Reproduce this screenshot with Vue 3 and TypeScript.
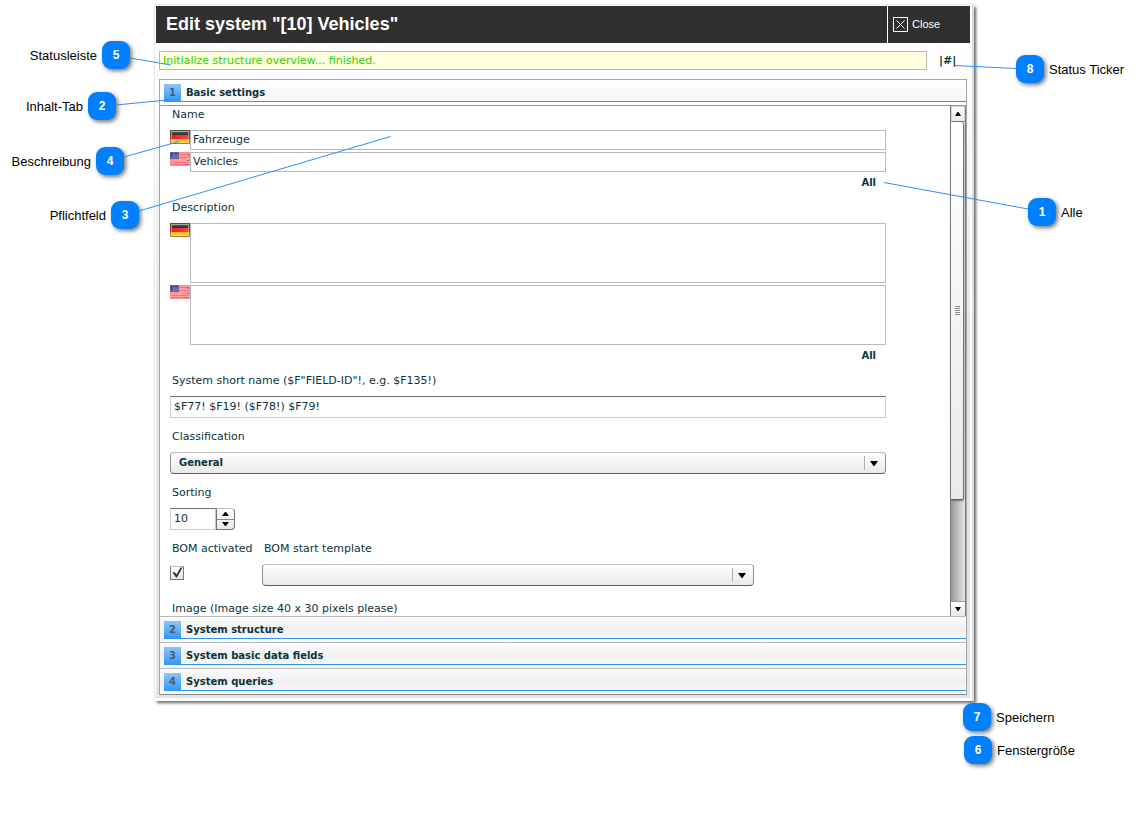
<script setup lang="ts">
import { ref } from 'vue'

type Side = 'left' | 'right'

interface Callout {
  id: number
  label: string
  side: Side
  edge: number
  top: number
}

const callouts: Callout[] = [
  { id: 5, label: 'Statusleiste', side: 'left', edge: 130, top: 41 },
  { id: 2, label: 'Inhalt-Tab', side: 'left', edge: 116, top: 92 },
  { id: 4, label: 'Beschreibung', side: 'left', edge: 124, top: 147 },
  { id: 3, label: 'Pflichtfeld', side: 'left', edge: 139, top: 201 },
  { id: 8, label: 'Status Ticker', side: 'right', edge: 126, top: 55 },
  { id: 1, label: 'Alle', side: 'right', edge: 114, top: 198 },
  { id: 7, label: 'Speichern', side: 'right', edge: 179, top: 703 },
  { id: 6, label: 'Fenstergröße', side: 'right', edge: 178, top: 736 },
]

function place(c: Callout) {
  return c.side === 'left'
    ? { top: `${c.top}px`, left: '0', width: `${c.edge}px` }
    : { top: `${c.top}px`, left: `calc(100% - ${c.edge}px)` }
}

const languages = ['de', 'us'] as const
const names = ref({ de: 'Fahrzeuge', us: 'Vehicles' })
const descriptions = ref({ de: '', us: '' })
const shortName = ref('$F77! $F19! ($F78!) $F79!')
const classification = ref('General')
const sorting = ref('10')
const bomActive = ref(true)
const template = ref('')
const closedTabs = [
  { no: 2, title: 'System structure' },
  { no: 3, title: 'System basic data fields' },
  { no: 4, title: 'System queries' },
]

function step(delta: number) {
  sorting.value = String(Number(sorting.value) + delta)
}
</script>

<template>
  <div class="page">
    <svg class="defs" width="0" height="0" aria-hidden="true">
      <defs>
        <linearGradient id="de-black" x1="0" y1="0" x2="0" y2="1">
          <stop offset="0" stop-color="#6a6a66" />
          <stop offset="1" stop-color="#2c2c2c" />
        </linearGradient>
        <linearGradient id="de-red" x1="0" y1="0" x2="1" y2="0">
          <stop offset="0" stop-color="#e01c1c" />
          <stop offset="1" stop-color="#ff4a4a" />
        </linearGradient>
        <linearGradient id="de-gold" x1="0" y1="0" x2="0" y2="1">
          <stop offset="0" stop-color="#f0b818" />
          <stop offset="1" stop-color="#ffe46a" />
        </linearGradient>
      </defs>
      <symbol id="flag-de" viewBox="0 0 20 14">
        <rect width="20" height="5" fill="url(#de-black)" />
        <rect y="5" width="20" height="4" fill="url(#de-red)" />
        <rect y="9" width="20" height="5" fill="url(#de-gold)" />
        <path d="M0.500 5V0.500H19.500V5" fill="none" stroke="#55523e" />
        <path d="M1 1.500H19" stroke="#aaa99c" />
        <path d="M1.500 2v3M18.500 2v3" stroke="#918f80" />
        <path d="M0.500 5v4M19.500 5v4" stroke="#9a3c28" />
        <path d="M1.500 5v4M18.500 5v4" stroke="#f07a6a" />
        <path d="M0.500 9v4.500H19.500V9" fill="none" stroke="#a48430" />
      </symbol>
      <symbol id="flag-us" viewBox="0 0 20 14">
        <rect width="20" height="14" fill="#ff9092" />
        <path d="M9 2.500h8M9 5.500h9M1 10.500h18M1 12.500h18" stroke="#ff7078" />
        <path d="M9 4h10M9 7h10M1 9h18M1 11.500h18" stroke="#ffa9a4" />
        <path d="M17 2.500h2v2M17 8.500h2M15 12.500h4" fill="none" stroke="#d85a70" />
        <rect width="9" height="7" fill="#6666a4" />
        <path d="M1.500 5V1.500H3M5 1.500h2" fill="none" stroke="#33338c" />
        <path d="M4 3.500h1M3 5.500h1M7 4.500h1" stroke="#8484b8" />
      </symbol>
    </svg>

    <main class="dialog">
      <header class="titlebar">
        <h1>Edit system "[10] Vehicles"</h1>
        <button type="button" class="close">
          <svg width="15" height="15" viewBox="0 0 15 15" aria-hidden="true">
            <rect x="0.5" y="0.5" width="14" height="14" fill="none" stroke="#fff" />
            <path d="M3.500 3.500l8 8M11.500 3.500l-8 8" stroke="#fff" fill="none" />
          </svg>
          Close
        </button>
      </header>

      <div class="body">
        <div class="status">
          <output class="message">Initialize structure overview... finished.</output>
          <span class="ticker">|#|</span>
        </div>

        <div class="accordion">
          <button type="button" class="tab" aria-expanded="true">
            <span class="no">1</span><span class="tab-title">Basic settings</span>
          </button>
          <section class="panel">
            <form class="form" @submit.prevent>
              <span class="caption first">Name</span>
              <div class="group">
                <label v-for="l in languages" :key="l" class="localized">
                  <svg class="flag" role="img" :aria-label="`Name ${l}`"><use :href="`#flag-${l}`" /></svg>
                  <input v-model="names[l]" type="text" class="box line" />
                </label>
              </div>
              <button type="button" class="all">All</button>

              <span class="caption follow">Description</span>
              <div class="group">
                <label v-for="l in languages" :key="l" class="localized">
                  <svg class="flag" role="img" :aria-label="`Description ${l}`"><use :href="`#flag-${l}`" /></svg>
                  <textarea v-model="descriptions[l]" class="box area"></textarea>
                </label>
              </div>
              <button type="button" class="all">All</button>

              <label class="caption follow" for="short">System short name ($F"FIELD-ID"!, e.g. $F135!)</label>
              <input id="short" v-model="shortName" type="text" class="inset" />

              <label class="caption next" for="class">Classification</label>
              <div class="select">
                <select id="class" v-model="classification">
                  <option>General</option>
                </select>
                <svg class="arrow" viewBox="0 0 8 5"><path d="M0 0h8L4.500 5h-1z" /></svg>
              </div>

              <label class="caption next" for="sort">Sorting</label>
              <div class="stepper">
                <input id="sort" v-model="sorting" type="text" class="inset" />
                <div class="steps">
                  <button type="button" aria-label="Increase" @click="step(1)">
                    <svg width="7" height="4" viewBox="0 0 7 4"><path d="M0 4h7L4 0H3z" /></svg>
                  </button>
                  <button type="button" aria-label="Decrease" @click="step(-1)">
                    <svg width="7" height="4" viewBox="0 0 7 4"><path d="M0 0h7L4 4H3z" /></svg>
                  </button>
                </div>
              </div>

              <div class="bom">
                <div class="bom-active">
                  <label class="caption next" for="bom">BOM activated</label>
                  <span class="check">
                    <input id="bom" v-model="bomActive" type="checkbox" />
                    <svg v-if="bomActive" class="tick" viewBox="0 0 14 14"><path d="M2.500 6.500l2-.5 2 2.500L10.500 1.500h2L7 11.500H6z" /></svg>
                  </span>
                </div>
                <div class="bom-template">
                  <label class="caption next" for="tpl">BOM start template</label>
                  <div class="select">
                    <select id="tpl" v-model="template">
                      <option value=""></option>
                    </select>
                    <svg class="arrow" viewBox="0 0 8 5"><path d="M0 0h8L4.500 5h-1z" /></svg>
                  </div>
                </div>
              </div>

              <span class="caption last">Image (Image size 40 x 30 pixels please)</span>
            </form>

            <div class="scrollbar">
              <button type="button" class="scroll-btn" aria-label="Scroll up">
                <svg width="6" height="4" viewBox="0 0 6 4"><path d="M0 4h6L3.500 0h-1z" /></svg>
              </button>
              <div class="track">
                <div class="thumb">
                  <svg width="5" height="9" viewBox="0 0 5 9"><path d="M0 .5h5M0 2.500h5M0 4.500h5M0 6.500h5M0 8.500h5" stroke="#888" /></svg>
                </div>
              </div>
              <button type="button" class="scroll-btn down" aria-label="Scroll down">
                <svg width="6" height="4" viewBox="0 0 6 4"><path d="M0 0h6L3.500 4h-1z" /></svg>
              </button>
            </div>
          </section>
          <button v-for="t in closedTabs" :key="t.no" type="button" class="tab closed" aria-expanded="false">
            <span class="no">{{ t.no }}</span><span class="tab-title">{{ t.title }}</span>
          </button>
        </div>
      </div>
    </main>

    <svg class="lines lines-left" width="400" height="240" aria-hidden="true">
      <path d="M130 58L171 65M116 105L173 99.500M124 157L179 141.500M139 211L390.500 136.500" />
    </svg>
    <svg class="lines lines-right" width="302" height="240" aria-hidden="true">
      <path d="M176 68.500L115 65.500M188 209L44 182.500" />
    </svg>
    <div v-for="c in callouts" :key="c.id" class="callout" :class="c.side" :style="place(c)">
      <span class="badge">{{ c.id }}</span>
      <span class="label">{{ c.label }}</span>
    </div>
  </div>
</template>

<style>
body {
  margin: 0;
  background: #fff;
}
</style>

<style scoped>
.page {
  position: relative;
  box-sizing: border-box;
  min-height: 100vh;
  padding: 5px 168px 60px 155px;
  font: 11px/16px "DejaVu Sans", Verdana, sans-serif;
  color: #0b333c;
}
.page * {
  box-sizing: border-box;
}
.defs {
  position: absolute;
}
button,
input,
select,
textarea {
  font: inherit;
  color: inherit;
  margin: 0;
  padding: 0;
  border: 0;
  border-radius: 0;
  background: none;
  outline: none;
}
button svg path {
  fill: #000;
}
.dialog {
  padding: 1px 4px 3px 1px;
  background: linear-gradient(90deg, #fff calc(100% - 2px), #ddd calc(100% - 2px));
  box-shadow: 2px 2px 3px #666, 0 0 2px #ccc;
}
.titlebar {
  display: flex;
  height: 37px;
  background: #303030;
  color: #fff;
}
h1 {
  flex: 1;
  margin: 0;
  padding-left: 10px;
  font: bold 18px/37px "Liberation Sans", Arial, sans-serif;
}
.close {
  display: flex;
  align-items: center;
  gap: 4px;
  width: 83px;
  padding-left: 5px;
  border-left: 1px solid #fff;
  font: 11px/15px "Liberation Sans", Arial, sans-serif;
}
.body {
  padding: 8px 3px 3px;
  background: linear-gradient(#fff, #f0f0f0 50%, #e6e6e6);
  background: linear-gradient(#fff 0, #fdfdfd 40px, #e4e4e4 300px);
}
.status {
  display: flex;
  align-items: center;
  padding-bottom: 9px;
}
.message {
  flex: 1;
  height: 19px;
  padding-left: 3px;
  border: 1px solid #b7babc;
  background: #ffffdf;
  color: #3c0;
  line-height: 17px;
}
.ticker {
  width: 40px;
  padding-left: 12px;
  font-weight: bold;
}
.accordion {
  border: 1px solid #a3a7aa;
  border-bottom-color: #888;
  background: #fff;
}
.tab {
  display: flex;
  width: 100%;
  height: 26px;
  padding: 4px 0 3px 4px;
  border-bottom: 1px solid #909497;
  background: linear-gradient(#fff, #f6f6f6 22px, #fff 22px);
  font-size: 10px;
  font-weight: bold;
  text-align: left;
  line-height: 18px;
}
.tab.closed {
  border-top: 1px solid #b7babc;
  border-bottom: 0;
  background: linear-gradient(#fbfbfb, #f0f0f0 50%, #fafafa);
}
.no {
  width: 17px;
  height: 18px;
  background: linear-gradient(#8fc5f8, #2e96f5);
  color: #44606c;
  text-align: center;
}
.tab-title {
  flex: 1;
  height: 18px;
  padding-left: 5px;
  border-bottom: 1px solid #3096ec;
}
.panel {
  display: flex;
}
.form {
  flex: 1;
  display: flex;
  flex-direction: column;
  align-items: stretch;
  padding: 0 64px 0 10px;
}
.caption {
  display: block;
  padding-left: 2px;
  margin-bottom: 7px;
}
.caption.first {
  margin-top: 1px;
}
.caption.follow {
  margin-top: 9px;
}
.caption.next {
  margin-top: 11px;
}
.caption.last {
  height: 15px;
  margin: 15px 0 0;
}
.group {
  display: flex;
  flex-direction: column;
  gap: 2px;
}
.localized {
  display: flex;
  align-items: flex-start;
}
.flag {
  width: 20px;
  height: 14px;
}
.box {
  display: block;
  flex: 1;
  min-width: 0;
  border: 1px solid #b7babc;
  background: #fff;
}
.line {
  height: 20px;
  padding: 0 2px 2px;
}
.area {
  height: 60px;
  resize: none;
}
.all {
  align-self: flex-end;
  margin-top: 3px;
  margin-right: 10px;
  font-size: 10px;
  font-weight: bold;
}
.inset {
  height: 22px;
  padding: 0 3px 2px;
  border: 1px solid #c9cbcc;
  border-top-color: #6f7376;
  background: #fff;
}
.select {
  position: relative;
  display: flex;
}
.select::after {
  content: "";
  position: absolute;
  top: 4px;
  right: 21px;
  height: 14px;
  border-left: 1px solid #aaafb2;
}
select {
  appearance: none;
  flex: 1;
  height: 22px;
  padding-left: 8px;
  border: 1px solid #8b8e90;
  border-top-color: #b7babc;
  border-bottom-color: #5b5d5e;
  border-radius: 4px;
  background: linear-gradient(#fff, #e9e9e9);
  font-size: 10px;
  font-weight: bold;
}
.arrow {
  position: absolute;
  top: 9px;
  right: 8px;
  width: 8px;
  height: 5px;
  pointer-events: none;
}
.stepper {
  display: flex;
}
.stepper .inset {
  width: 46px;
}
.steps {
  display: flex;
  flex-direction: column;
  width: 19px;
  height: 22px;
  border: 1px solid #707375;
  border-top-color: #b7babc;
  border-radius: 0 4px 4px 0;
  background: linear-gradient(#fff, #e9e9e9);
}
.steps button {
  flex: 1;
  display: flex;
  align-items: center;
  justify-content: center;
}
.steps button + button {
  border-top: 1px solid #858889;
}
.bom {
  display: flex;
}
.bom-active {
  width: 92px;
}
.bom-active .caption {
  white-space: nowrap;
}
.bom-template {
  flex: 0 1 492px;
}
.check {
  position: relative;
  display: block;
  width: 14px;
  height: 14px;
  margin-top: 9px;
}
.check input {
  display: block;
  appearance: none;
  width: 14px;
  height: 14px;
  border: 1px solid #777;
  border-top-color: #b7babc;
  background: linear-gradient(#fff, #e6e6e6);
}
.tick {
  position: absolute;
  inset: 0;
  fill: #2b333c;
  pointer-events: none;
}
.scrollbar {
  display: flex;
  flex-direction: column;
  width: 16px;
  border-left: 1px solid #777;
  border-right: 1px solid #777c80;
}
.scroll-btn {
  display: flex;
  align-items: center;
  justify-content: center;
  height: 16px;
  border: 1px solid #d5d5d5;
  border-bottom-color: #777;
  background: linear-gradient(#fff, #e9e9e9);
}
.scroll-btn.down {
  height: 15px;
  border: 0;
  border-top: 1px solid #999;
}
.track {
  flex: 1;
  background: linear-gradient(90deg, #94999b, #e5e7e8);
}
.thumb {
  display: flex;
  align-items: center;
  justify-content: center;
  width: 13px;
  height: 79%;
  border-right: 1px solid #6f7376;
  border-bottom: 1px solid #5b5d5e;
  border-radius: 0 3px 2px 0;
  background: linear-gradient(#fff, #e9e9e9);
  box-shadow: 0 1px 2px #777;
}
.lines {
  position: absolute;
  top: 0;
  fill: none;
  stroke: #2a90f8;
  stroke-width: 1;
  pointer-events: none;
}
.lines-left {
  left: 0;
}
.lines-right {
  right: 0;
}
.callout {
  position: absolute;
  display: flex;
  align-items: center;
  gap: 5px;
  font: 13px/16px "Liberation Sans", Arial, sans-serif;
  color: #000;
  white-space: nowrap;
}
.callout.left {
  flex-direction: row-reverse;
}
.label {
  padding-top: 2px;
}
.badge {
  width: 28px;
  height: 28px;
  border-radius: 9px;
  background: #0080ff;
  box-shadow: 2px 2px 4px #777;
  color: #fff;
  font-size: 12px;
  font-weight: bold;
  line-height: 28px;
  text-align: center;
}
</style>
